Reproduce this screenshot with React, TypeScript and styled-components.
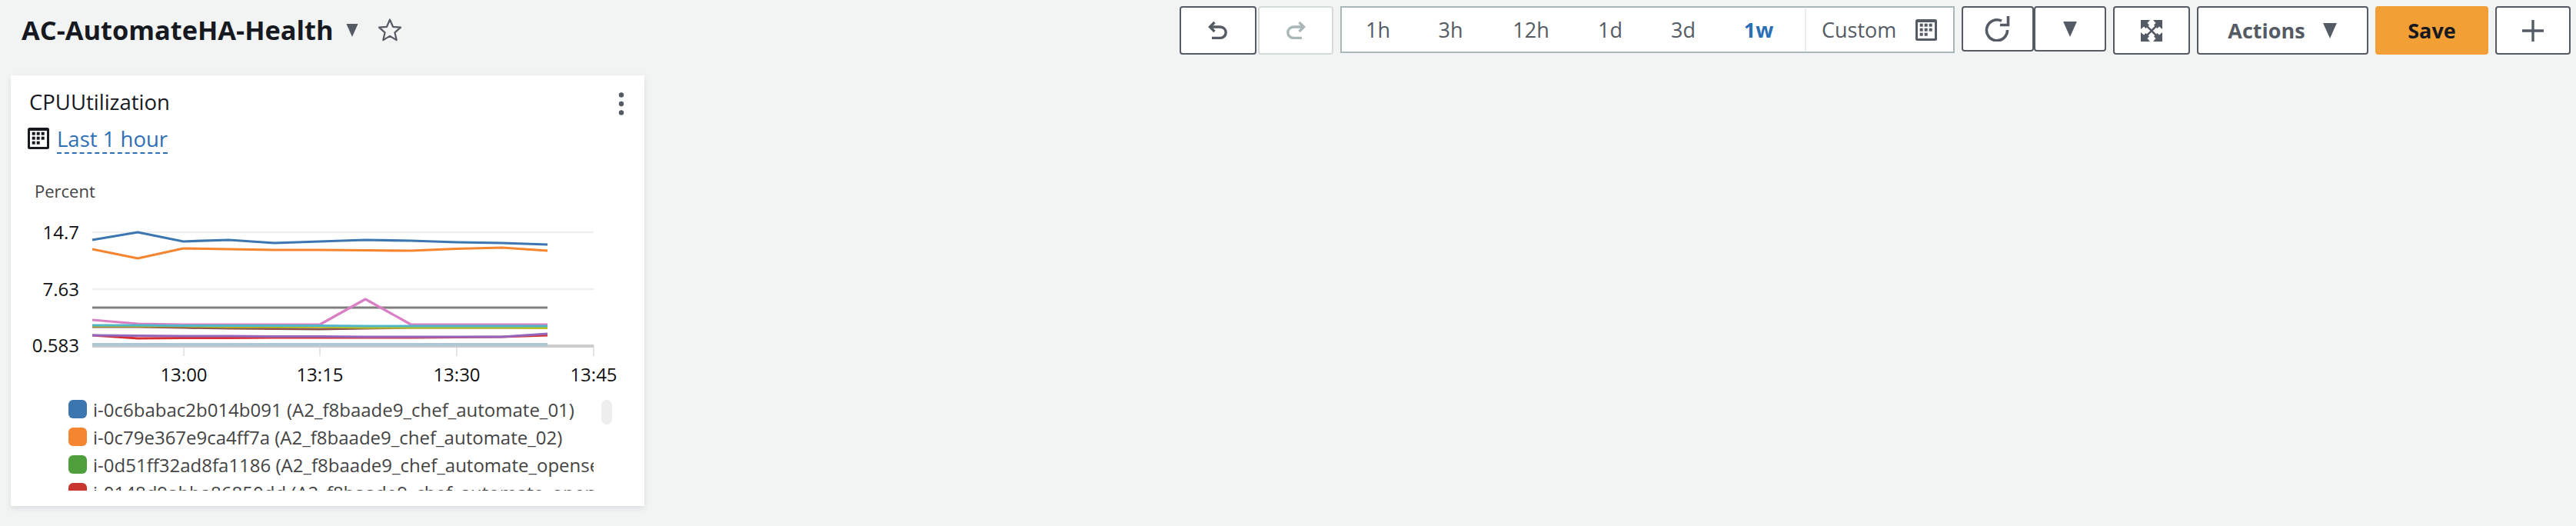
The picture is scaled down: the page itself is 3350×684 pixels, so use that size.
import React from "react";
import styled, { createGlobalStyle } from "styled-components";

const Global = createGlobalStyle`
  html, body { margin: 0; padding: 0; background: #f2f3f3; }
  body { width: 3350px; height: 684px; overflow: hidden; font-family: "Open Sans", "Noto Sans", sans-serif; }
`;

const Page = styled.div`
  width: 3350px;
  height: 684px;
  box-sizing: border-box;
  padding: 8px 7px 0 14px;
  display: flex;
  flex-direction: column;
`;

const Header = styled.header`
  display: flex;
  align-items: flex-start;
  justify-content: space-between;
  height: 90px;
`;

const TitleGroup = styled.div`
  display: flex;
  align-items: center;
  height: 62px;
  padding-left: 14px;
  gap: 14px;
`;

const Title = styled.h1`
  margin: 0;
  font-size: 34.4px;
  line-height: 44px;
  font-weight: 700;
  color: #16191f;
`;

const Toolbar = styled.div`
  display: flex;
  align-items: flex-start;
  gap: 9px;
`;

const Joined = styled.div<{ $gap?: number }>`
  display: flex;
  align-items: flex-start;
  gap: ${(p) => p.$gap ?? 0}px;
`;

const IconButton = styled.button<{ $w: number; $h?: number; $disabled?: boolean }>`
  width: ${(p) => p.$w}px;
  height: ${(p) => p.$h ?? 63}px;
  box-sizing: border-box;
  padding: 0;
  background: #fff;
  border: 2px solid ${(p) => (p.$disabled ? "#d5dbdb" : "#545b64")};
  border-radius: 4px;
  display: flex;
  align-items: center;
  justify-content: center;
  color: ${(p) => (p.$disabled ? "#aab7b8" : "#545b64")};
`;

const TimeBar = styled.div`
  width: 799px;
  height: 61px;
  box-sizing: border-box;
  background: #fff;
  border: 2px solid #aab7b8;
  display: flex;
  align-items: center;
  color: #545b64;
  font-size: 27px;
`;

const TimeItem = styled.span<{ $active?: boolean; $w: number }>`
  width: ${(p) => p.$w}px;
  text-align: center;
  font-weight: ${(p) => (p.$active ? 700 : 400)};
  color: ${(p) => (p.$active ? "#2a6fb5" : "#545b64")};
`;

const Custom = styled.span`
  height: 55px;
  flex: 1;
  margin-left: 11px;
  box-sizing: border-box;
  border-left: 2px solid #eaeded;
  display: flex;
  align-items: center;
  padding-left: 20px;
  gap: 25px;
  color: #545b64;
`;

const ActionsButton = styled.button`
  width: 223px;
  height: 63px;
  box-sizing: border-box;
  background: #fff;
  border: 2px solid #545b64;
  border-radius: 4px;
  display: flex;
  align-items: center;
  justify-content: center;
  gap: 22px;
  font: 700 27px "Open Sans", sans-serif;
  color: #545b64;
`;

const SaveButton = styled.button`
  width: 147px;
  height: 63px;
  border: 0;
  border-radius: 4px;
  background: #f2a036;
  color: #16191f;
  font: 700 27px "Open Sans", sans-serif;
`;

const Card = styled.section`
  width: 824px;
  height: 560px;
  box-sizing: border-box;
  background: #fff;
  box-shadow: 0 3px 8px rgba(0, 21, 41, 0.1);
  padding: 18px 26px 0 24px;
  display: flex;
  flex-direction: column;
`;

const CardHeader = styled.div`
  display: flex;
  justify-content: space-between;
  align-items: flex-start;
`;

const CardTitle = styled.div`
  font-size: 27.5px;
  line-height: 34px;
  color: #16191f;
`;

const Range = styled.div`
  display: flex;
  align-items: center;
  gap: 10px;
  margin: 9px 0 0 -2px;
`;

const RangeLink = styled.span`
  font-size: 27.5px;
  line-height: 34px;
  color: #2e6fb5;
  border-bottom: 2px dashed #2e6fb5;
  padding-top: 5px;
`;

const Chart = styled.svg`
  display: block;
  margin: 9px 0 0 -24px;
  flex: none;
`;

const LegendWrap = styled.div`
  display: flex;
  margin: 5px 0 0 51px;
  height: 124px;
`;

const LegendList = styled.div`
  width: 683px;
  height: 124px;
  overflow: hidden;
`;

const LegendRow = styled.div`
  display: flex;
  align-items: center;
  height: 36px;
  gap: 8px;
  white-space: nowrap;
  font-size: 24px;
  color: #444;
`;

const Swatch = styled.span<{ $c: string }>`
  flex: none;
  width: 24px;
  height: 24px;
  border-radius: 6px;
  background: ${(p) => p.$c};
`;

const ScrollThumb = styled.div`
  width: 14px;
  height: 32px;
  margin: 6px 0 0 10px;
  border-radius: 7px;
  background: #eee;
`;

const Calendar = ({ color = "#545b64" }: { color?: string }) => (
  <svg width="28" height="28" viewBox="0 0 28 28">
    <rect width="28" height="28" rx="2.5" fill={color} />
    <rect x="3" y="4" width="22" height="21" fill="#fff" />
    {[5.7, 11.7, 17.7].flatMap((cx, col) =>
      [5.7, 11.7, 17.7].map((cy, row) =>
        row === 2 && col === 2 ? null : <rect key={cx + "-" + cy} x={cx} y={cy} width="4" height="4" fill={color} />
      )
    )}
  </svg>
);

const Caret = ({ w = 16, h = 18, color = "#545b64" }: { w?: number; h?: number; color?: string }) => (
  <svg width={w} height={h} viewBox="0 0 16 18">
    <path d="M0 0H16L8 18Z" fill={color} />
  </svg>
);

const x = (i: number) => 120 + i * 59.2;
const line = (ys: number[]) => ys.map((y, i) => `${x(i).toFixed(1)},${y}`).join(" ");

const series: { c: string; ys: number[]; w?: number }[] = [
  { c: "#aec7d6", ys: Array(11).fill(448), w: 4 },
  { c: "#8c564b", ys: [425, 425, 426, 427, 427.5, 428, 427, 426, 426, 426, 426] },
  { c: "#7f7f7f", ys: Array(11).fill(400) },
  { c: "#d97fc4", ys: [416, 421, 422, 422, 422, 422, 389, 422, 422, 422, 422] },
  { c: "#bcbd22", ys: [424, 424, 424, 425, 425, 425, 426, 426, 426, 426, 426.5] },
  { c: "#4fb8c8", ys: [423, 423, 423.5, 423.5, 423.5, 423.5, 424, 424, 424, 424, 424] },
  { c: "#d62f2f", ys: [436, 440, 439.5, 439.5, 439, 439, 439, 439, 438.5, 438, 436] },
  { c: "#9467bd", ys: [436, 436.5, 437, 437, 437.5, 437.5, 438, 438, 438, 438, 434] },
  { c: "#f5852f", ys: [324, 336, 323, 324, 325, 325, 325.5, 326, 323.5, 322, 326] },
  { c: "#3c76b0", ys: [312, 302, 314, 312, 316, 314, 312, 313, 315, 316, 318] },
];

const legend = [
  ["#3c76b0", "i-0c6babac2b014b091 (A2_f8baade9_chef_automate_01)"],
  ["#f5852f", "i-0c79e367e9ca4ff7a (A2_f8baade9_chef_automate_02)"],
  ["#4f9f3d", "i-0d51ff32ad8fa1186 (A2_f8baade9_chef_automate_opensearch_01)"],
  ["#c9352f", "i-0148d9abba86850dd (A2_f8baade9_chef_automate_opensearch_02)"],
];

export default function App() {
  return (
    <Page>
      <Global />
      <Header>
        <TitleGroup>
          <Title>AC-AutomateHA-Health</Title>
          <Caret w={20} h={17} />
          <svg width="32" height="32" viewBox="0 0 32 32" style={{ marginLeft: 9 }}>
            <path d="M16 2.5l4 9.3 10 .9-7.6 6.6 2.3 9.8L16 23.9l-8.7 5.2 2.3-9.8L2 12.7l10-.9z" fill="none" stroke="#545b64" strokeWidth="2.2" strokeLinejoin="round" />
          </svg>
        </TitleGroup>
        <Toolbar>
          <Joined $gap={2}>
            <IconButton $w={100}>
              <svg width="26" height="26" viewBox="0 0 26 26" fill="none" stroke="currentColor" strokeWidth="3.4">
                <path d="M8.5 2L2.5 8l6 6" />
                <path d="M2.5 8H16a7.2 7.2 0 0 1 0 14.4H5" />
              </svg>
            </IconButton>
            <IconButton $w={98} $disabled>
              <svg width="26" height="26" viewBox="0 0 26 26" fill="none" stroke="currentColor" strokeWidth="3.4">
                <path d="M17.5 2l6 6-6 6" />
                <path d="M23.5 8H10a7.2 7.2 0 0 0 0 14.4H21" />
              </svg>
            </IconButton>
          </Joined>
          <TimeBar>
            <TimeItem $w={94}>1h</TimeItem>
            <TimeItem $w={95}>3h</TimeItem>
            <TimeItem $w={114}>12h</TimeItem>
            <TimeItem $w={92}>1d</TimeItem>
            <TimeItem $w={98}>3d</TimeItem>
            <TimeItem $active $w={98}>1w</TimeItem>
            <Custom>
              Custom
              <Calendar />
            </Custom>
          </TimeBar>
          <Joined>
            <IconButton $w={94} $h={59}>
              <svg width="34" height="33" viewBox="0 0 34 33" fill="none" stroke="currentColor" strokeWidth="3.6">
                <path d="M22 6.2A13.5 13.5 0 1 0 29.5 18" />
                <path d="M20 11.5H30.5V0" />
              </svg>
            </IconButton>
            <IconButton $w={94} $h={59}>
              <Caret w={20} h={20} />
            </IconButton>
          </Joined>
          <IconButton $w={100}>
            <svg width="28" height="28" viewBox="0 0 28 28" fill="currentColor">
              <path d="M0 0H12L8.5 4 11 6.5 6.5 11 4 8.5 0 12Z" />
              <path d="M28 0H16L19.5 4 17 6.5 21.5 11 24 8.5 28 12Z" />
              <path d="M0 28H12L8.5 24 11 21.5 6.5 17 4 19.5 0 16Z" />
              <path d="M28 28H16L19.5 24 17 21.5 21.5 17 24 19.5 28 16Z" />
              <path d="M7 7L21 21M21 7L7 21" stroke="currentColor" strokeWidth="2.6" />
            </svg>
          </IconButton>
          <ActionsButton>
            Actions
            <Caret w={20} h={20} />
          </ActionsButton>
          <SaveButton>Save</SaveButton>
          <IconButton $w={98}>
            <svg width="28" height="28" viewBox="0 0 28 28" stroke="currentColor" strokeWidth="3.4">
              <path d="M14 0v28M0 14h28" />
            </svg>
          </IconButton>
        </Toolbar>
      </Header>
      <Card>
        <CardHeader>
          <CardTitle>CPUUtilization</CardTitle>
          <svg width="8" height="30" viewBox="0 0 8 30" fill="#545b64" style={{ marginTop: 4 }}>
            <circle cx="4" cy="3.5" r="3.2" />
            <circle cx="4" cy="15" r="3.2" />
            <circle cx="4" cy="26.5" r="3.2" />
          </svg>
        </CardHeader>
        <Range>
          <Calendar color="#16191f" />
          <RangeLink>Last 1 hour</RangeLink>
        </Range>
        <Chart width="824" height="300" viewBox="14 209 824 300">
          <text x="45" y="257" fontSize="22" fill="#444" fontFamily="Open Sans">Percent</text>
          <path d="M120 302H772M120 376H772" stroke="#eee" strokeWidth="2.4" />
          {[239, 416, 594, 772].map((t) => (
            <path key={t} d="M0 0V14" transform={`translate(${t} 449)`} stroke="#e5e5e5" strokeWidth="2" />
          ))}
          <path d="M120 450H772" stroke="#ccc" strokeWidth="4" />
          {[["14.7", 302], ["7.63", 376], ["0.583", 449]].map(([t, y]) => (
            <text key={t} x="103" y={Number(y) + 9} textAnchor="end" fontSize="24" fill="#111" fontFamily="Open Sans">{t}</text>
          ))}
          {[["13:00", 239], ["13:15", 416], ["13:30", 594], ["13:45", 772]].map(([t, xx]) => (
            <text key={t} x={xx} y="496" textAnchor="middle" fontSize="24" fill="#111" fontFamily="Open Sans">{t}</text>
          ))}
          {series.map((s) => (
            <polyline key={s.c} points={line(s.ys)} fill="none" stroke={s.c} strokeWidth={s.w ?? 3.2} strokeLinejoin="round" />
          ))}
        </Chart>
        <LegendWrap>
          <LegendList>
            {legend.map(([c, t]) => (
              <LegendRow key={t}>
                <Swatch $c={c} />
                {t}
              </LegendRow>
            ))}
          </LegendList>
          <ScrollThumb />
        </LegendWrap>
      </Card>
    </Page>
  );
}
